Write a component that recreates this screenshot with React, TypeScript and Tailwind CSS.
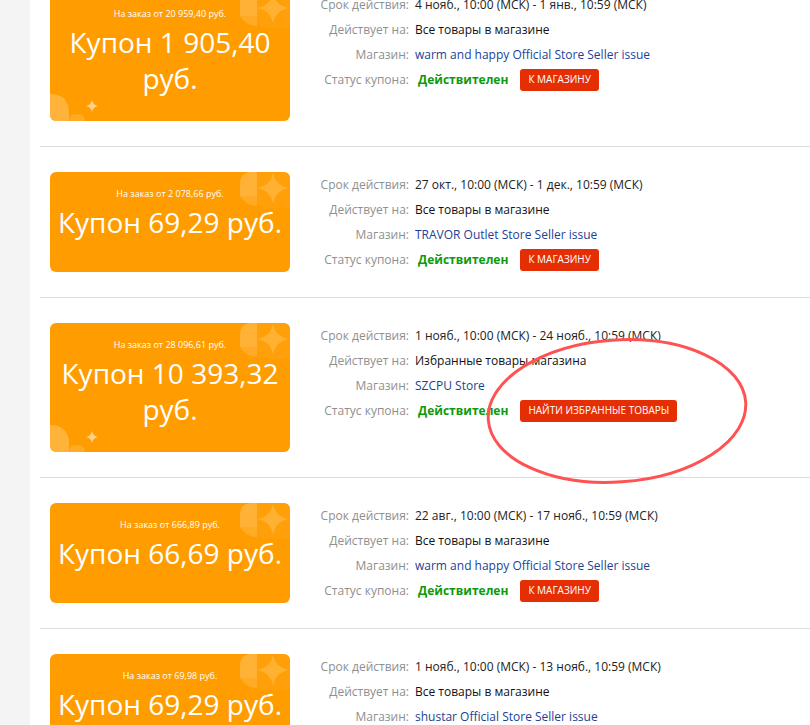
import React from 'react';

type Coupon = {
  min: string;
  lines: string[];
  period: string;
  scope: string;
  store: string;
  action: string;
};

const coupons: Coupon[] = [
  {
    min: 'На заказ от 20 959,40 руб.',
    lines: ['Купон 1 905,40', 'руб.'],
    period: '4 нояб., 10:00 (МСК) - 1 янв., 10:59 (МСК)',
    scope: 'Все товары в магазине',
    store: 'warm and happy Official Store Seller issue',
    action: 'К магазину',
  },
  {
    min: 'На заказ от 2 078,66 руб.',
    lines: ['Купон 69,29 руб.'],
    period: '27 окт., 10:00 (МСК) - 1 дек., 10:59 (МСК)',
    scope: 'Все товары в магазине',
    store: 'TRAVOR Outlet Store Seller issue',
    action: 'К магазину',
  },
  {
    min: 'На заказ от 28 096,61 руб.',
    lines: ['Купон 10 393,32', 'руб.'],
    period: '1 нояб., 10:00 (МСК) - 24 нояб., 10:59 (МСК)',
    scope: 'Избранные товары магазина',
    store: 'SZCPU Store',
    action: 'Найти избранные товары',
  },
  {
    min: 'На заказ от 666,89 руб.',
    lines: ['Купон 66,69 руб.'],
    period: '22 авг., 10:00 (МСК) - 17 нояб., 10:59 (МСК)',
    scope: 'Все товары в магазине',
    store: 'warm and happy Official Store Seller issue',
    action: 'К магазину',
  },
  {
    min: 'На заказ от 69,98 руб.',
    lines: ['Купон 69,29 руб.'],
    period: '1 нояб., 10:00 (МСК) - 13 нояб., 10:59 (МСК)',
    scope: 'Все товары в магазине',
    store: 'shustar Official Store Seller issue',
    action: 'К магазину',
  },
];

function CouponCard({ c }: { c: Coupon }) {
  const tall = c.lines.length > 1;
  return (
    <div className="relative w-[240px] shrink-0 overflow-hidden rounded-[6px] bg-[#ff9c00] pt-4 pb-[25px] text-center text-white">
      {/* corner ornaments */}
      <svg className="absolute right-0 top-0" width="50" height="40" viewBox="0 0 50 40">
        <path d="M0 0 H17 V24 H0 V12 Q0 0 12 0 Z" fill="#ffb640" opacity="0.85" />
        <path d="M0 24 H17 V34 Q6 34 0 24 Z" fill="#ffab26" />
        <path d="M17 0 H50 V36 H27 Q17 36 17 26 Z" fill="#ffa414" opacity="0.5" />
        <path d="M33 1 Q35.5 13.5 48 16 Q35.5 18.5 33 31 Q30.5 18.5 18 16 Q30.5 13.5 33 1 Z" fill="#ffb232" />
      </svg>
      {tall && (
        <svg className="absolute bottom-0 left-0" width="60" height="30" viewBox="0 0 60 30">
          <path d="M0 3 Q19 3 19 22 V30 H0 Z" fill="#ffb640" opacity="0.9" />
          <path d="M19 30 Q19 23 27 23 Q35 23 35 30 Z" fill="#ffab26" />
          <path d="M42 9 Q43 14 48 15 Q43 16 42 21 Q41 16 36 15 Q41 14 42 9 Z" fill="#ffd08a" />
        </svg>
      )}
      <div className="relative text-[9px] leading-[12px]">{c.min}</div>
      <div className="relative mt-1">
        {c.lines.map((l) => (
          <div key={l} className="whitespace-nowrap text-[28px] leading-[36px]">
            {l}
          </div>
        ))}
      </div>
    </div>
  );
}

function Row({ label, children }: { label: string; children: React.ReactNode }) {
  return (
    <div className="flex h-[25px] items-center">
      <div className="w-[100px] shrink-0 pr-[1px] text-right text-[#8f8f8f]">{label}</div>
      <div className="ml-[5px] flex items-center whitespace-nowrap">{children}</div>
    </div>
  );
}

function CouponItem({ c, first }: { c: Coupon; first?: boolean }) {
  return (
    <div
      className={
        'flex border-b border-[#dedede] pb-[25px] pl-[10px] pt-[25px] ' + (first ? '-mt-[33px]' : '')
      }
    >
      <CouponCard c={c} />
      <div className="ml-[20px] text-[12px]">
        <Row label="Срок действия:">
          <span className="text-[#222]">{c.period}</span>
        </Row>
        <Row label="Действует на:">
          <span className="text-[#111]">{c.scope}</span>
        </Row>
        <Row label="Магазин:">
          <span className="text-[#1d3f96]">{c.store}</span>
        </Row>
        <Row label="Статус купона:">
          <span className="ml-[3px] font-bold text-[#0d9a0d]">Действителен</span>
          <span className="ml-[12px] flex h-[22px] items-center rounded-[3px] bg-[#e62e04] px-[8px] text-[10px] uppercase text-white">
            {c.action}
          </span>
        </Row>
      </div>
    </div>
  );
}

export default function App() {
  return (
    <div className="relative flex h-[725px] w-[810px] overflow-hidden bg-white font-['Open_Sans',sans-serif]">
      <div className="w-[30px] shrink-0 bg-[#f4f4f4]" />
      <div className="ml-[10px] flex-1">
        {coupons.map((c, i) => (
          <CouponItem key={i} c={c} first={i === 0} />
        ))}
      </div>
      <svg
        className="pointer-events-none absolute left-0 top-0"
        width="810"
        height="725"
        viewBox="0 0 810 725"
      >
        <ellipse
          cx="617"
          cy="411"
          rx="129"
          ry="71"
          transform="rotate(-4 617 411)"
          fill="none"
          stroke="#ff5252"
          strokeWidth="3"
        />
      </svg>
    </div>
  );
}
